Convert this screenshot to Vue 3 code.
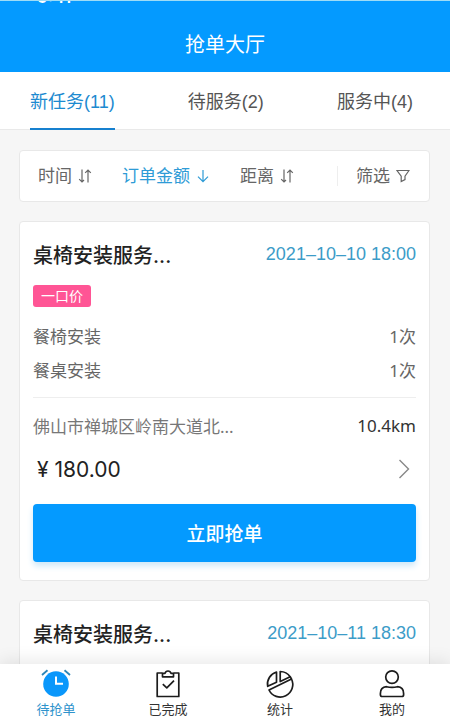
<script setup>
import { ref } from 'vue'

const tabs = [
  { name: '新任务', count: 11 },
  { name: '待服务', count: 2 },
  { name: '服务中', count: 4 },
]
const activeTab = ref(0)

const sorts = [
  { name: '时间', icon: 'both' },
  { name: '订单金额', icon: 'down' },
  { name: '距离', icon: 'both' },
]
const activeSort = ref(1)

// An order without details shows its heading row only.
const orders = [
  {
    title: '桌椅安装服务...',
    time: '2021–10–10 18:00',
    details: {
      tag: '一口价',
      items: [
        { name: '餐椅安装', qty: '1次' },
        { name: '餐桌安装', qty: '1次' },
      ],
      address: '佛山市禅城区岭南大道北...',
      distance: '10.4km',
      price: '180.00',
    },
  },
  { title: '桌椅安装服务...', time: '2021–10–11 18:30' },
]

const navs = ['待抢单', '已完成', '统计', '我的']
const activeNav = ref(0)
</script>

<template>
  <div class="app">
    <header class="header">
      <div class="status"><span class="clock">9:41</span></div>
      <h1 class="heading">抢单大厅</h1>
    </header>

    <nav class="tabs">
      <button
        v-for="(t, i) in tabs"
        :key="t.name"
        type="button"
        class="tab"
        :class="{ active: i === activeTab }"
        @click="activeTab = i"
      >{{ t.name }}({{ t.count }})</button>
    </nav>

    <main class="content">
      <div class="filters">
        <button
          v-for="(s, i) in sorts"
          :key="s.name"
          type="button"
          class="sort"
          :class="{ active: i === activeSort }"
          @click="activeSort = i"
        >
          {{ s.name }}
          <svg v-if="s.icon === 'both'" class="sort-icon" viewBox="0 0 14 16">
            <path d="M4 1.5V14M1.2 11.2L4 14L6 12M10 14.5V2M7.2 4.8L10 2L12.8 4.8" />
          </svg>
          <svg v-else class="sort-icon" viewBox="0 0 14 16">
            <path d="M7 2V13.6M2 8.6L7 13.6L12 8.6" />
          </svg>
        </button>
        <button type="button" class="sort screen">
          筛选
          <svg class="sort-icon" viewBox="0 0 14 16">
            <path d="M1 2.5H13L9 8.2V11.6L5.2 13.6V8.2Z" />
          </svg>
        </button>
      </div>

      <article v-for="o in orders" :key="o.time" class="card">
        <div class="row top">
          <h2 class="title">{{ o.title }}</h2>
          <time class="time">{{ o.time }}</time>
        </div>
        <template v-if="o.details">
          <span class="tag">{{ o.details.tag }}</span>
          <ul class="items">
            <li v-for="it in o.details.items" :key="it.name" class="row item">
              <span>{{ it.name }}</span><span>{{ it.qty }}</span>
            </li>
          </ul>
          <div class="row place">
            <span class="address">{{ o.details.address }}</span>
            <span class="distance">{{ o.details.distance }}</span>
          </div>
          <div class="row price-row">
            <span class="price">¥ {{ o.details.price }}</span>
            <svg class="chevron" viewBox="0 0 12 20"><path d="M1.5 1L10.5 10L1.5 19" /></svg>
          </div>
          <button type="button" class="grab">立即抢单</button>
        </template>
      </article>
    </main>

    <nav class="bottom">
      <button
        v-for="(n, i) in navs"
        :key="n"
        type="button"
        class="nav"
        :class="{ active: i === activeNav }"
        @click="activeNav = i"
      >
        <svg v-if="i === 0" class="nav-icon" viewBox="0 0 30 30">
          <circle cx="15" cy="15" r="12.8" fill="#0a97fb" />
          <path d="M15 7.5V14.8H22" fill="none" stroke="#fff" stroke-width="2" />
          <path d="M1 6L6.5 1.2M23.5 1.2L29 6" fill="none" stroke="#2b86b8" stroke-width="1.8" />
        </svg>
        <svg v-else-if="i === 1" class="nav-icon line" viewBox="0 0 30 30">
          <path d="M9.5 4H4.2V27.5H25.8V4H20.5" />
          <path d="M9.5 7.8V4.3H12A3.1 3.1 0 0 1 18 4.3H20.5V7.8Z" />
          <path d="M9.8 15.1L13.8 18.9L21 11.7" />
        </svg>
        <svg v-else-if="i === 2" class="nav-icon line" viewBox="0 0 30 30">
          <path d="M11.5 3A12.5 12.5 0 0 0 2.7 17.3L11.5 13.2Z" />
          <path d="M15.2 2.5V12.6L25.2 7.8A12.5 12.5 0 0 0 15.2 2.5Z" />
          <path d="M26.5 10A12.5 12.5 0 0 1 4 21Z" />
          <path d="M25.2 7.8L26.5 10" />
        </svg>
        <svg v-else class="nav-icon line" viewBox="0 0 30 30">
          <circle cx="15" cy="8.1" r="6.3" />
          <path d="M9.5 17.7Q15 19.1 20.5 17.7Q26.6 18.1 26.6 24.5V25.7Q26.6 27.5 24.8 27.5H5.2Q3.4 27.5 3.4 25.7V24.5Q3.4 18.1 9.5 17.7Z" />
        </svg>
        {{ n }}
      </button>
    </nav>
  </div>
</template>

<style>
body {
  margin: 0;
  background: #f6f6f6;
}
</style>

<style scoped>
.app {
  display: flex;
  flex-direction: column;
  height: 100vh;
  overflow: hidden;
  background: #f6f6f6;
  color: #222;
  font-family: "Noto Sans", "Noto Sans CJK SC", sans-serif;
  font-size: 17px;
}
button {
  margin: 0;
  padding: 0;
  border: 0;
  background: none;
  color: inherit;
  font: inherit;
  cursor: pointer;
}
.header {
  flex: none;
  background: #049aff;
  border-top: 1px solid #9fdcf6;
  color: #fff;
}
.status {
  display: flex;
  align-items: flex-end;
  height: 16px;
  padding: 0 37px;
  overflow: hidden;
}
.clock {
  font-family: Inter, sans-serif;
  font-size: 17px;
  font-weight: 600;
  line-height: 40px;
}
.heading {
  margin: 0;
  font-size: 20px;
  font-weight: 400;
  line-height: 55px;
  text-align: center;
}
.tabs {
  display: flex;
  flex: none;
  justify-content: space-between;
  padding: 0 37px 0 30px;
  background: #fff;
  border-bottom: 1px solid #e9e9e9;
}
.tab {
  height: 58px;
  margin-bottom: -1px;
  border-bottom: 2px solid transparent;
  color: #555;
  font-family: "Liberation Sans", "Noto Sans CJK SC", sans-serif;
  font-size: 18px;
}
.tab.active {
  border-color: #1680cf;
  color: #1c8ad0;
}
.content {
  flex: 1;
  min-height: 0;
  padding: 20px 20px 0 19px;
  overflow: hidden;
}
.filters {
  display: flex;
  align-items: center;
  gap: 30px;
  height: 50px;
  padding: 0 19px 0 18px;
  background: #fff;
  border: 1px solid #e8e8e8;
  border-radius: 4px;
}
.sort {
  display: flex;
  align-items: center;
  gap: 6px;
  color: #666;
  line-height: 20px;
}
.sort.active {
  color: #2e9bd6;
}
.screen {
  margin-left: auto;
  padding-left: 18px;
  border-left: 1px solid #eee;
}
.sort-icon {
  width: 14px;
  height: 16px;
  fill: none;
  stroke: currentColor;
  stroke-width: 1.2;
}
.card {
  min-height: 64px;
  margin-top: 19px;
  padding: 14px 13px 18px;
  background: #fff;
  border: 1px solid #e8e8e8;
  border-radius: 4px;
}
.row {
  display: flex;
  align-items: center;
  justify-content: space-between;
}
.top {
  height: 36px;
}
.title {
  margin: 0;
  font-family: Inter, "Noto Sans CJK SC", sans-serif;
  font-size: 20px;
  font-weight: 500;
}
.time {
  color: #3c9cc8;
  font-family: "Liberation Sans", sans-serif;
  font-size: 18px;
}
.tag {
  display: block;
  width: fit-content;
  margin-top: 13px;
  padding: 0 8px;
  background: #ff5595;
  border-radius: 3px;
  color: #fff;
  font-size: 14px;
  line-height: 22px;
}
.items {
  margin: 11px 0 0;
  padding: 0 0 11px;
  border-bottom: 1px solid #eee;
  list-style: none;
}
.item {
  height: 34px;
  color: #666;
}
.place {
  height: 34px;
  margin-top: 10px;
}
.address {
  color: #777;
}
.distance {
  color: #333;
}
.price-row {
  height: 54px;
  padding: 0 6px 0 4px;
}
.price {
  font-family: Inter, sans-serif;
  font-size: 21px;
}
.chevron {
  width: 12px;
  height: 20px;
  fill: none;
  stroke: #888;
  stroke-width: 1.4;
}
.grab {
  display: block;
  width: 100%;
  height: 58px;
  margin-top: 8px;
  background: #049aff;
  border-radius: 4px;
  box-shadow: 0 4px 6px #cfe8f8;
  color: #fff;
  font-size: 19px;
  font-weight: 500;
}
.bottom {
  position: relative;
  display: flex;
  flex: none;
  padding-right: 2px;
  background: #fff;
  box-shadow: 0 -2px 18px rgba(0, 0, 0, 0.1);
}
.nav {
  display: flex;
  flex: 1;
  flex-direction: column;
  align-items: center;
  gap: 1px;
  padding-top: 5px;
  color: #333;
  font-size: 13px;
  line-height: 18px;
}
.nav.active {
  color: #2e93cc;
}
.nav-icon {
  width: 30px;
  height: 30px;
}
.line {
  fill: none;
  stroke: #1c1c1c;
  stroke-width: 1.7;
  stroke-linejoin: round;
}
</style>
